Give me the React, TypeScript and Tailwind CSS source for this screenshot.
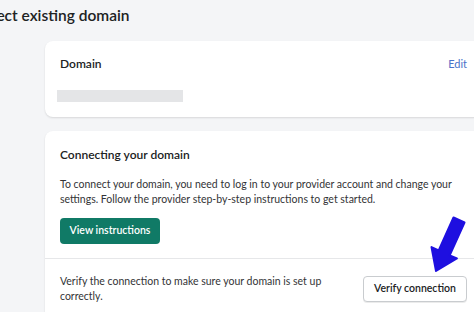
export default function App() {
  return (
    <div
      className="relative w-[474px] h-[312px] overflow-hidden bg-[#f4f5f7] text-[#333436]"
      style={{ fontFamily: 'Lato, "Open Sans", sans-serif' }}
    >
      <h1 className="ml-[-40px] pt-[3px] text-[15.5px] leading-[24px] font-semibold text-[#202223] whitespace-nowrap">
        Connect existing domain
      </h1>

      {/* domain card */}
      <div className="ml-[45px] mt-[14px] w-[437px] h-[76px] rounded-lg bg-white shadow-[0_1px_2px_rgba(0,0,0,0.12)] px-[15px] pt-[14px]">
        <div className="flex justify-between items-center h-[18px]">
          <span className="text-[12px] font-semibold text-[#202223]">Domain</span>
          <span className="text-[11px] text-[#4a72c9]">Edit</span>
        </div>
        <div className="mt-[17px] ml-[-3px] w-[126px] h-[12px] bg-[#e4e5e7]" />
      </div>

      {/* connecting card */}
      <div className="ml-[45px] mt-[14px] w-[437px] rounded-lg bg-white shadow-[0_1px_2px_rgba(0,0,0,0.12)]">
        <div className="px-[15px] pt-[15px] pb-[14px] border-b border-[#e6e7e9]">
          <h2 className="text-[12px] leading-[18px] font-semibold text-[#202223]">
            Connecting your domain
          </h2>
          <p className="mt-[13px] w-[400px] text-[10.5px] leading-[15px]">
            To connect your domain, you need to log in to your provider account and change your
            settings. Follow the provider step-by-step instructions to get started.
          </p>
          <button className="mt-[11px] h-[26px] w-[100px] rounded bg-[#107a66] text-white text-[10.5px] font-semibold">
            View instructions
          </button>
        </div>
        <div className="flex items-center px-[15px] pt-[15px] pb-[20px]">
          <p className="w-[270px] text-[10.5px] leading-[15px]">
            Verify the connection to make sure your domain is set up correctly.
          </p>
          <button className="ml-auto h-[26px] w-[104px] rounded border border-[#c9cccf] bg-white text-[10.5px] font-semibold text-[#202223] shadow-[0_1px_0_rgba(0,0,0,0.08)]">
            Verify connection
          </button>
        </div>
      </div>

      {/* annotation arrow */}
      <svg className="absolute left-[420px] top-[205px]" width="54" height="75" viewBox="0 0 54 75">
        <polygon
          points="33.5,12.5 44.5,17.5 29.7,50.3 36.9,53.5 16,66 11.5,42.1 18.7,45.3"
          fill="#1e0fe0"
          stroke="#1e0fe0"
          strokeWidth="2"
          strokeLinejoin="round"
        />
      </svg>
    </div>
  );
}
